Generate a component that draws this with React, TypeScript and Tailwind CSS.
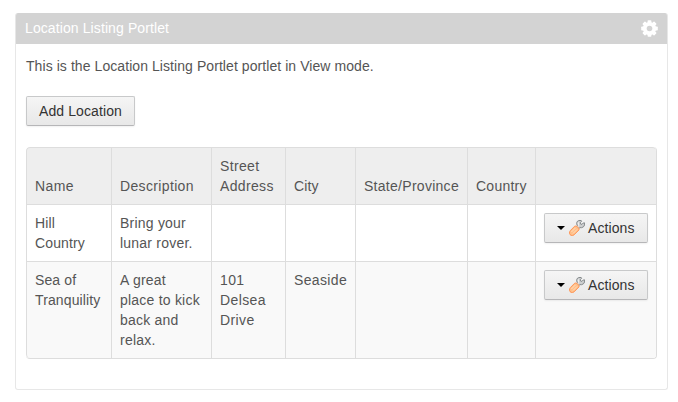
import React from 'react';

const columns = [
  { label: 'Name', look: 'w-[85px] tracking-[0.4px]' },
  { label: 'Description', look: 'w-[100px] tracking-[0.35px]' },
  { label: 'Street Address', look: 'w-[74px] tracking-[0.35px]' },
  { label: 'City', look: 'w-[70px] tracking-[0.15px]' },
  { label: 'State/Province', look: 'w-[112px] tracking-[0.28px]' },
  { label: 'Country', look: 'w-[68px] tracking-[0.25px]' },
];

const cellTracking = [
  'tracking-[0.12px]',
  'tracking-[0.22px]',
  'tracking-[0.4px]',
  'tracking-[0.35px]',
  '',
  '',
];

const locations = [
  ['Hill Country', 'Bring your lunar rover.', '', '', '', ''],
  ['Sea of Tranquility', 'A great place to kick back and relax.', '101 Delsea Drive', 'Seaside', '', ''],
];

const buttonLook =
  'flex h-[30px] items-center rounded-[2px] border border-[#c8c9ca] border-b-[#b6b6b8] bg-linear-to-b from-[#f5f5f5] to-[#e8e8e8] leading-5 text-[#333] whitespace-nowrap shadow-[0_1px_2px_rgba(0,0,0,0.06)] tracking-[0.1px]';

function Gear() {
  return (
    <svg className="size-[17px]" viewBox="-8.5 -8.5 17 17" fill="#fff">
      {[0, 45, 90, 135].map((a) => (
        <rect key={a} x="-1.9" y="-8.3" width="3.8" height="16.6" rx="0.7" transform={`rotate(${a})`} />
      ))}
      <circle r="4.7" fill="none" stroke="#fff" strokeWidth="3.8" />
      <circle r="2.8" fill="#d3d3d3" />
    </svg>
  );
}

function Wrench() {
  return (
    <svg className="ml-1 size-4 shrink-0" viewBox="0 0 16 16">
      <path
        d="M7 7.2 8.4 5.8 7.6 3.7 8.1 1.6 9.8.5 12.2.5 12.6 1.4 11.3 2.6 11.5 4 13 4.4 14.2 3 15.5 2.8 15.6 5 14.4 6.9 12.5 7.7 10.9 7.6 9.4 9Z"
        fill="#cdcfd0"
        stroke="#858a8c"
        strokeWidth="1"
        strokeLinejoin="round"
      />
      <path d="M9.3 2.2 9.6 5.6 8.6 7" fill="none" stroke="#f4f4f4" strokeWidth="0.9" />
      <path
        d="M5.7 6.2C7.4 5.2 10.8 8.2 9.9 10L5 14.9C3.2 16.2.6 15.4.5 13.2.4 12 .8 11.2 1.5 10.4Z"
        fill="#ffc08a"
        stroke="#ff9455"
        strokeWidth="1"
      />
      <path d="M2.4 12 6.5 7.9M4 13.5 8.1 9.4" stroke="#ffdfbf" strokeWidth="0.9" />
    </svg>
  );
}

function ActionsButton() {
  return (
    <button className={`${buttonLook} w-[104px] pl-3`}>
      <svg className="h-1 w-2 shrink-0" viewBox="0 0 8 4">
        <path d="M0 0H8L4 4Z" fill="#000" />
      </svg>
      <Wrench />
      <span className="ml-[3px]">Actions</span>
    </button>
  );
}

export default function App() {
  return (
    <div className="h-[402px] w-[678px] bg-white pt-[13px] pl-[15px] font-['Liberation_Sans',Arial,sans-serif] text-[14px] leading-5 text-[#555]">
      <section className="flex h-[377px] w-[653px] flex-col overflow-hidden rounded-[3px] border border-t-0 border-[#e7e7e7]">
        <header className="-mx-px flex h-[31px] shrink-0 items-center justify-between bg-[#d3d3d3] pr-[10px] pb-px pl-[10px] tracking-[0.1px] text-white">
          <h1>Location Listing Portlet</h1>
          <Gear />
        </header>
        <div className="flex flex-col items-start px-[10px] pt-3">
          <p className="tracking-[0.07px]">This is the Location Listing Portlet portlet in View mode.</p>
          <button className={`${buttonLook} mt-5 w-[109px] pl-3`}>Add Location</button>
          <table className="mt-[21px] w-[631px] table-fixed border-separate border-spacing-0 overflow-hidden rounded-[4px] border-r border-b border-[#ddd]">
            <thead className="bg-[#eee]">
              <tr>
                {columns.map((c) => (
                  <th key={c.label} className={`${c.look} border-t border-l border-[#ddd] p-2 text-left align-bottom font-normal first:rounded-tl-[4px]`}>
                    {c.label}
                  </th>
                ))}
                <th className="rounded-tr-[4px] border-t border-l border-[#ddd]" />
              </tr>
            </thead>
            <tbody>
              {locations.map((row) => (
                <tr key={row[0]} className="even:bg-[#f9f9f9] last:[&>td:first-child]:rounded-bl-[4px]">
                  {row.map((cell, i) => (
                    <td key={i} className={`${cellTracking[i]} border-t border-l border-[#ddd] p-2 align-top`}>
                      {cell}
                    </td>
                  ))}
                  <td className="border-t border-l border-[#ddd] p-2 align-top">
                    <ActionsButton />
                  </td>
                </tr>
              ))}
            </tbody>
          </table>
        </div>
      </section>
    </div>
  );
}
